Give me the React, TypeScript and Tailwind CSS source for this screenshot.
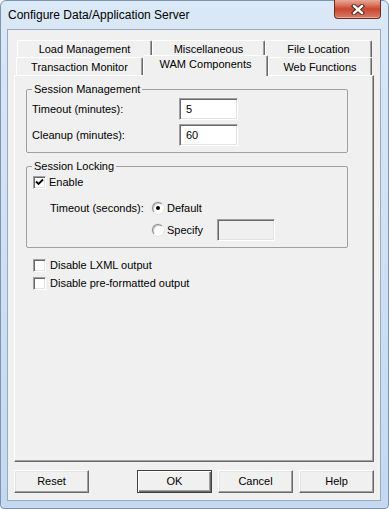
import React from 'react';

const Check = () => (
  <svg width="9" height="9" viewBox="0 0 9 9" className="block">
    <path d="M1 3.5 L3.5 6 L8 1.5" fill="none" stroke="#000" strokeWidth="1.8" />
  </svg>
);

const Checkbox = ({ checked }: { checked?: boolean }) => (
  <div className="w-[13px] h-[13px] shrink-0 flex items-center justify-center bg-white border border-t-[#a0a0a0] border-l-[#a0a0a0] border-b-white border-r-white shadow-[inset_1px_1px_0_#696969,inset_-1px_-1px_0_#e3e3e3]">
    {checked && <Check />}
  </div>
);

const Radio = ({ checked }: { checked?: boolean }) => (
  <div className="w-[12px] h-[12px] shrink-0 rounded-full flex items-center justify-center bg-white border border-t-[#8f8f8f] border-l-[#8f8f8f] border-b-white border-r-white shadow-[inset_1px_1px_0_#c8c8c8,0_0_0_0.5px_#d8d8d8]">
    {checked && <div className="w-[4px] h-[4px] rounded-full bg-black" />}
  </div>
);

const TextBox = ({ value, disabled, className }: { value?: string; disabled?: boolean; className: string }) => (
  <div
    className={`${className} shrink-0 flex items-center pl-[6px] border border-t-[#a0a0a0] border-l-[#a0a0a0] border-b-white border-r-white shadow-[inset_1px_1px_0_#696969,inset_-1px_-1px_0_#e3e3e3] ${
      disabled ? 'bg-[#f0f0f0]' : 'bg-white'
    }`}
  >
    {value}
  </div>
);

const Tab = ({ label, className }: { label: string; className: string }) => (
  <div
    className={`${className} h-full flex items-center justify-center border-l border-t border-white border-r border-r-[#696969] rounded-tl-[2px] rounded-tr-[2px] shadow-[inset_-1px_0_0_#a0a0a0]`}
  >
    {label}
  </div>
);

const Button = ({ label, isDefault }: { label: string; isDefault?: boolean }) =>
  isDefault ? (
    <button className="w-[75px] h-[23px] bg-[#f0f0f0] border border-[#404040] shadow-[inset_1px_1px_0_#fff,inset_-1px_-1px_0_#696969,inset_-2px_-2px_0_#a0a0a0]">
      {label}
    </button>
  ) : (
    <button className="w-[75px] h-[23px] bg-[#f0f0f0] border border-t-white border-l-white border-b-[#696969] border-r-[#696969] shadow-[inset_-1px_-1px_0_#a0a0a0,inset_1px_1px_0_#e3e3e3]">
      {label}
    </button>
  );

export default function App() {
  return (
    <div className="w-[389px] h-[509px] flex flex-col font-['Liberation_Sans',Arial,sans-serif] text-[11px] text-black bg-linear-to-b from-[#dae8f7] to-[#c4d8ef] border border-[#7d93ae] rounded-t-[6px] rounded-b-[4px] px-[6px] pb-[7px] pr-[7px]">
      {/* title bar */}
      <div className="h-[28px] flex items-start justify-between shrink-0">
        <div className="text-[12px] pl-[1px] pt-[7px] leading-[14px]">Configure Data/Application Server</div>
        <div className="w-[47px] h-[19px] -mt-px flex items-center justify-center rounded-b-[4px] border border-t-0 border-[#6b2b22] bg-linear-to-b from-[#e9a898] via-[#c9462f] to-[#d77a64] shadow-[inset_0_-1px_0_#e9a898]">
          <svg width="14" height="11" viewBox="0 0 14 11">
            <path d="M3 2 L11 9 M11 2 L3 9" stroke="#3b1a16" strokeWidth="4.2" strokeLinecap="square" />
            <path d="M3 2 L11 9 M11 2 L3 9" stroke="#fff" strokeWidth="2.4" strokeLinecap="square" />
          </svg>
        </div>
      </div>

      {/* client area */}
      <div className="flex-1 flex flex-col bg-[#f0f0f0] border border-[#9aabc0] px-[6px] pb-[7px]">
        {/* tabs */}
        <div className="mt-[10px] flex flex-col">
          <div className="flex h-[17px] ml-[3px]">
            <Tab label="Load Management" className="w-[135px]" />
            <Tab label="Miscellaneous" className="w-[113px]" />
            <Tab label="File Location" className="w-[107px]" />
          </div>
          <div className="flex h-[18px] ml-[2px] items-start">
            <Tab label="Transaction Monitor" className="w-[127px] pt-[2px]" />
            <div className="relative z-10 w-[125px] h-[21px] -mt-[2px] pb-[3px] flex items-center justify-center bg-[#f0f0f0] border-l border-t border-white border-r border-r-[#696969] rounded-tl-[2px] rounded-tr-[2px] shadow-[inset_-1px_0_0_#a0a0a0]">
              WAM Components
            </div>
            <Tab label="Web Functions" className="w-[104px] pt-[2px]" />
          </div>
        </div>

        {/* panel */}
        <div className="flex-1 flex flex-col border-l border-t border-white border-r border-b border-r-[#696969] border-b-[#696969] shadow-[inset_-1px_-1px_0_#a0a0a0]">
          <fieldset className="mt-[7px] ml-[11px] w-[322px] border border-[#a0a0a0] rounded-[2px] px-[5px] pb-[6px]">
            <legend className="px-[2px] leading-[13px]">Session Management</legend>
            <div className="pt-[2px] flex flex-col gap-[4px]">
              <div className="flex items-center h-[22px]">
                <div className="w-[147px]">Timeout (minutes):</div>
                <TextBox value="5" className="w-[59px] h-[22px]" />
              </div>
              <div className="flex items-center h-[22px]">
                <div className="w-[147px]">Cleanup (minutes):</div>
                <TextBox value="60" className="w-[59px] h-[22px]" />
              </div>
            </div>
          </fieldset>

          <fieldset className="mt-[7px] ml-[11px] w-[322px] border border-[#a0a0a0] rounded-[2px] px-[5px] pb-[6px]">
            <legend className="px-[2px] leading-[13px]">Session Locking</legend>
            <div className="pt-[2px] flex flex-col">
              <div className="flex items-center h-[14px] gap-[3px] pl-[1px]">
                <Checkbox checked />
                <span>Enable</span>
              </div>
              <div className="flex items-center h-[16px] mt-[11px] pl-[18px]">
                <div className="w-[102px]">Timeout (seconds):</div>
                <Radio checked />
                <span className="ml-[3px]">Default</span>
              </div>
              <div className="flex items-center h-[22px] mt-[3px] pl-[120px]">
                <Radio />
                <span className="ml-[3px] w-[50px]">Specify</span>
                <TextBox disabled className="w-[58px] h-[22px]" />
              </div>
            </div>
          </fieldset>

          <div className="mt-[11px] ml-[18px] flex flex-col gap-[5px]">
            <div className="flex items-center h-[13px] gap-[4px]">
              <Checkbox />
              <span>Disable LXML output</span>
            </div>
            <div className="flex items-center h-[13px] gap-[4px]">
              <Checkbox />
              <span>Disable pre-formatted output</span>
            </div>
          </div>
        </div>

        {/* buttons */}
        <div className="mt-[8px] flex justify-between">
          <Button label="Reset" />
          <div className="flex gap-[6px]">
            <Button label="OK" isDefault />
            <Button label="Cancel" />
            <Button label="Help" />
          </div>
        </div>
      </div>
    </div>
  );
}
